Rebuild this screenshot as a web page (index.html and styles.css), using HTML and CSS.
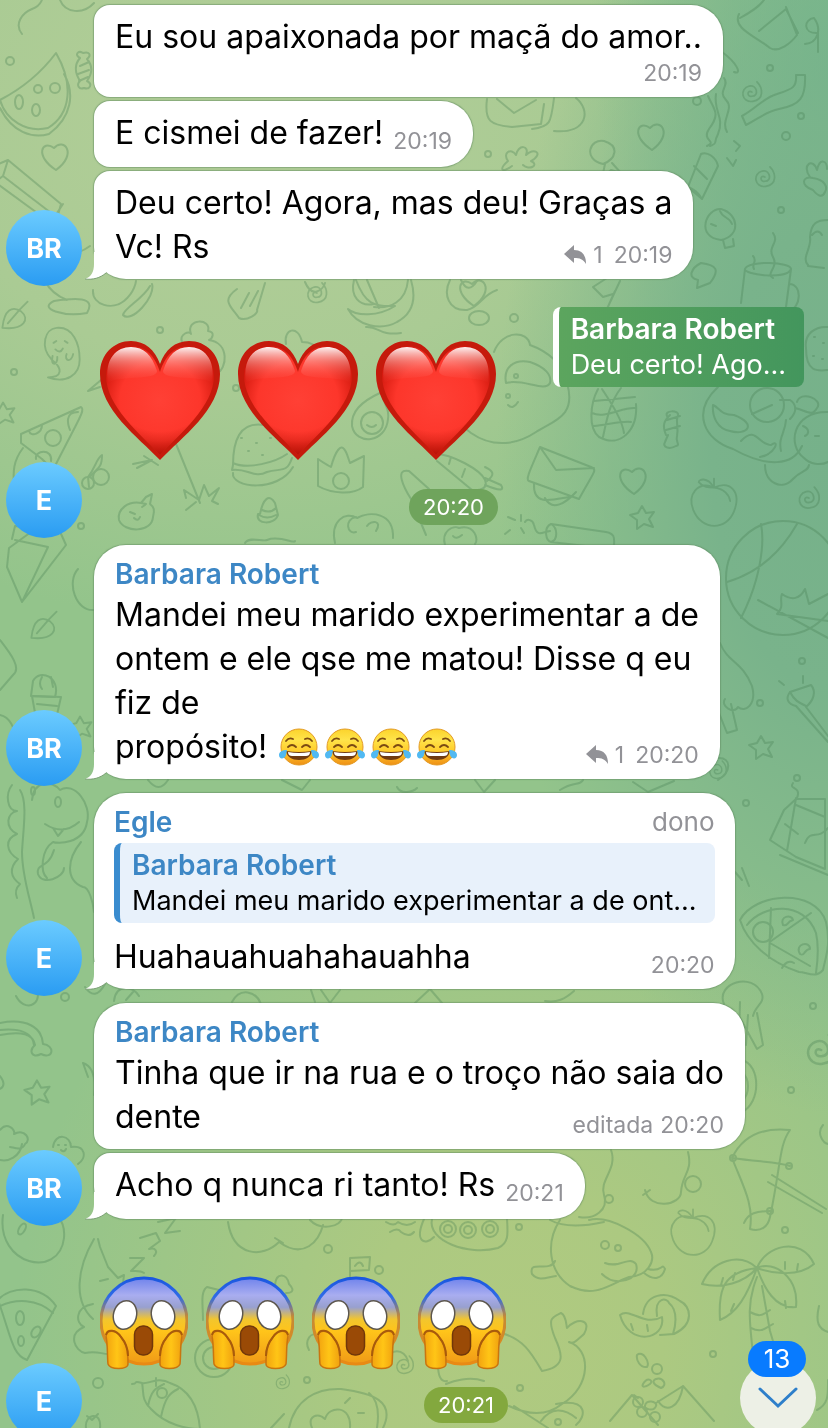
FILE: index.html
```html
<!DOCTYPE html>
<html lang="pt-BR">
<head>
<meta charset="utf-8">
<meta name="viewport" content="width=device-width, initial-scale=1">
<title>Chat</title>
<link rel="stylesheet" href="styles.css">
</head>
<body>
<svg class="defs" aria-hidden="true">
  <defs>
    <radialGradient id="heartFill" cx=".5" cy=".5" r=".6"><stop offset="0" stop-color="#ff4035"/><stop offset=".62" stop-color="#fd362b"/><stop offset="1" stop-color="#c91207"/></radialGradient>
    <linearGradient id="heartShine" x1="0" y1="0" x2="0" y2="1"><stop offset="0" stop-color="#fff" stop-opacity=".95"/><stop offset=".4" stop-color="#ffb3ad" stop-opacity=".55"/><stop offset="1" stop-color="#ff5147" stop-opacity="0"/></linearGradient>
    <radialGradient id="heartShade" gradientUnits="userSpaceOnUse" cx="60" cy="36" r="80"><stop offset=".68" stop-color="#b00c00" stop-opacity="0"/><stop offset="1" stop-color="#a50c00" stop-opacity=".75"/></radialGradient>
    <linearGradient id="fearFace" x1="0" y1="0" x2="0" y2="1"><stop offset="0" stop-color="#6f83ec"/><stop offset=".2" stop-color="#a9adf0"/><stop offset=".34" stop-color="#98a0cf"/><stop offset=".48" stop-color="#f2c62e"/><stop offset=".62" stop-color="#ffc41a"/><stop offset="1" stop-color="#f09a17"/></linearGradient>
    <linearGradient id="fearEdge" x1="0" y1="0" x2="0" y2="1"><stop offset="0" stop-color="#1a57e0"/><stop offset=".22" stop-color="#2f6be6"/><stop offset=".45" stop-color="#c58a35"/><stop offset="1" stop-color="#e98a14"/></linearGradient>
    <linearGradient id="hand" x1="0" y1="0" x2="1" y2="0"><stop offset="0" stop-color="#f2a30f"/><stop offset=".5" stop-color="#ffc516"/><stop offset="1" stop-color="#f0a00f"/></linearGradient>
    <linearGradient id="joyFace" x1="0" y1="0" x2="0" y2="1"><stop offset="0" stop-color="#fbd32c"/><stop offset=".3" stop-color="#ffe44a"/><stop offset=".65" stop-color="#ffc928"/><stop offset="1" stop-color="#ee8f16"/></linearGradient>
    <symbol id="heart" viewBox="0 0 120 120">
      <path fill="#c51a0c" d="M60 119C38 96 0 69 0 33 0 13 14 0 31 0c14 0 24 9 29 23C65 9 75 0 89 0c17 0 31 13 31 33 0 36-38 63-60 86z"/>
      <path fill="url(#heartFill)" d="M60 114C40 92 6 66 6 34 6 16 17 5 31 5c15 0 24 10 29 26C65 15 74 5 89 5c14 0 25 11 25 29 0 32-34 58-54 80z"/>
      <path fill="url(#heartShade)" d="M60 114C40 92 6 66 6 34 6 16 17 5 31 5c15 0 24 10 29 26C65 15 74 5 89 5c14 0 25 11 25 29 0 32-34 58-54 80z"/>
      <path fill="url(#heartShine)" d="M8 42C4 17 17 6 31 6c13 0 21 8 26 24 0 10-40 4-49 12zM112 42C116 17 103 6 89 6 76 6 68 14 63 30c0 10 40 4 49 12z"/>
    </symbol>
    <symbol id="scream" viewBox="0 0 88 94">
      <circle cx="44" cy="45" r="43" fill="url(#fearFace)" stroke="url(#fearEdge)" stroke-width="3"/>
      <g fill="#fff" stroke="#5d574e" stroke-width="1.500"><ellipse cx="25" cy="39" rx="11.500" ry="14.500" transform="rotate(16 25 39)"/><ellipse cx="63" cy="39" rx="11.500" ry="14.500" transform="rotate(-16 63 39)"/></g>
      <rect x="34.500" y="50" width="18" height="29" rx="8.500" fill="#9a4a06" stroke="#71370a" stroke-width="1.500"/>
      <g fill="url(#hand)" stroke="#c9750f" stroke-width="1.500"><path d="M6 60c1-7 10-6 15 1 6 7 7 13 7 27 0 6-18 6-20 0-1-9 0-18-2-28z"/><path d="M82 60c-1-7-10-6-15 1-6 7-7 13-7 27 0 6 18 6 20 0 1-9 0-18 2-28z"/></g>
      <path fill="none" stroke="#a85b0c" stroke-width="2" d="M6 59c1-6 10-6 15 2 5 6 7 11 7 19M82 59c-1-6-10-6-15 2-5 6-7 11-7 19"/>
    </symbol>
    <symbol id="joy" viewBox="0 0 40 38">
      <circle cx="20" cy="19" r="18" fill="url(#joyFace)" stroke="#e39a25"/>
      <path fill="none" stroke="#7b4a12" stroke-width="1.800" stroke-linecap="round" d="M7 13q3-4 7-2M33 13q-3-4-7-2M9 19q4-4 8 0M23 19q4-4 8 0"/>
      <path fill="#703a10" d="M7 23q13 2 26 0c-1 6-6 9-13 9S8 29 7 23z"/>
      <path fill="#fff" d="M9 24q11 2 22 0c0 3-2 4-4 4H13c-2 0-4-1-4-4z"/>
      <path fill="#51b9f2" d="M8 22C3 22 0 24 0 27c0 5 6 4 7 0zM32 22c5 0 8 2 8 5 0 5-6 4-7 0z"/>
    </symbol>
    <symbol id="reply" viewBox="0 0 22 20"><path fill="#929297" d="M0 9 10 0v5c8 0 12 5 12 14-3-5-6-6-12-6v5z"/></symbol>
    <symbol id="tail" viewBox="0 0 24 28"><path fill="#fff" d="M9 0v12C9 20 6 25 0 27c8 1 15-1 21-6V0z"/><path fill="none" stroke="#7c9f76" d="M0 27c8 1 15-1 21-6"/></symbol>
    <symbol id="dHeart" viewBox="-20 -20 40 40" overflow="visible"><path d="M0 14C-22 0-14-17-2-8 8-19 22-2 0 14z"/></symbol>
    <symbol id="dStar" viewBox="-20 -20 40 40" overflow="visible"><path d="m-1-11 4 7 8-1-5 7 4 8-9-3-7 5v-9l-7-5 8-2z"/></symbol>
    <symbol id="dSpiral" viewBox="-20 -20 40 40" overflow="visible"><path d="M1 0C-5-3-5 6 1 5c9 0 6-14-3-12-12 3-9 20 4 18C16 9 14-5 7-12"/></symbol>
    <symbol id="dCandy" viewBox="-20 -20 40 40" overflow="visible"><path d="M-4-12c-6-3-2-8 3-5 6-2 9 2 4 6 6 7 5 15 0 22 6 3 3 9-3 7-5 2-8-3-4-7-5-8-6-16 0-23zM-4-4 5-8M-6 4l11-4M-5 11l9-4"/></symbol>
    <symbol id="dLeaf" viewBox="-20 -20 40 40" overflow="visible"><path d="M-14 12c2-20 11-25 21-18 10 8 3 21-21 18zM-8 7 6-9M6-9l8-8"/></symbol>
    <symbol id="dGhost" viewBox="-20 -30 40 60" overflow="visible"><path d="M-14 24C2 24 2 14-10 5-23-9-17-28-5-29 13-31 20-12 20 5c0 16-14 26-34 19zM-6-6q5 5 8-1M-8-13l3-2M4-15l3 2M-9 1c-3 12 6 10 5 1M13-1c-2 10-10 7-7 0"/></symbol>
    <symbol id="dFruit" viewBox="-30 -30 60 60" overflow="visible"><path d="M0-16c-18-8-30 8-23 25 10 24 37 22 45 2 9-23-4-35-22-27zM0-16c-8-13-17-9-17-6 5 6 11 6 17 6zM0-16v-10M0-16c11 1 17 8 18 15"/></symbol>
  </defs>
</svg>

<main class="chat">
  <svg class="wallpaper" viewBox="0 0 828 1428" preserveAspectRatio="xMidYMid slice" aria-hidden="true">
    <g class="doodles">
      <g transform="translate(38 88)"><path d="M18-35C3-15-15 0-38 12c6 20 26 33 48 28 23-14 26-44 8-75zM-38 20c12 24 32 31 49 26C34 29 37 5 26-14"/><circle cx="0" cy="1" r="4"/><circle cx="17" cy="0" r="5"/><ellipse cx="-19" cy="14" rx="4" ry="7"/><ellipse cx="-2" cy="22" rx="4" ry="6"/></g>
      <path d="M22 34c-8-10 0-21 10-25 9-3 13-12 9-18M60 0c5 13 23 15 34 3"/>
      <use href="#dCandy" x="64" y="50" width="40" height="40"/><use href="#dHeart" x="36" y="136" width="40" height="40"/>
      <path d="m-4 165 12-5 53 44-6 22-60-44M8 160l-5 16 52 40 8-12M3 176l-8 6M42 228c4 31 30 31 48 18"/>
      <circle cx="10" cy="61" r="4"/><circle cx="697" cy="101" r="4"/><circle cx="786" cy="136" r="4"/><circle cx="770" cy="68" r="3"/><circle cx="801" cy="116" r="3"/>
      <path d="M740 18c9-5 18-10 24-18M739 14c-7 14 16 22 31 34 9 5 21-5 27-13l-11-28M759 31l27-22 12 24M805 44c13-1 17-15 9-26M814 18c-10 1-12 16 4 15M818 33v19M722 52c14 10 21 23 12 20M724 78c6 8-7 13 2 22s-6 20 1 32"/>
      <use href="#dSpiral" x="734" y="75" width="34" height="34"/><path d="M796 75h9c1 23-5 30-26 34-14 3-19 9-33 16l-4-9c15-8 21-18 35-22 16-5 20-7 19-19z"/><path d="M708 96c6 14 13 17 1 33-8 12 9 12-2 17M716 94c-3 17 9 23 2 40-6 12 1 8-8 12M734 141l6 5-4 5M727 158l6 8 3-6M701 154l-13 33 14 12 16-33c-2-9-11-15-17-12zM694 166l13 13M688 187c7 3 10 5 14 12"/>
      <use href="#dSpiral" x="747" y="160" width="34" height="34"/><path d="M810 177c-9-12 3-20 7-7 3-13 10-9 10-1M813 190c-13-4-11-15 0-12 12 2 15 9 12 14-3 7-8 3-12-2z"/>
      <use href="#dHeart" x="632" y="116" width="40" height="40"/><path d="M487 99c-3 23 4 26 25 28l29-3 3-20M497 99l17 14 22-13M554 98c-3 24-3 29-22 31M576 98c15 12 12 36-22 33"/>
      <circle cx="488" cy="154" r="3"/><path d="M512 166c-11 8-13 3-4-5-6-8 3-14 8-6 2-11 14-10 10 0 7-8 19-2 5 6 9 4-2 10-8 4M603 164c-21-5-13-26 1-23 16 5 12 18-1 23zM605 164l-3 14 9-8 10 3-9-10"/>
      <path d="M721 240c-26-3-15-32 0-31 18 5 20 27 0 31zM711 224l5 2M720 211c3 8 9 5 12 13M723 240l2 8 9-2-1-7"/><circle cx="781" cy="210" r="3"/><path d="M808 265c-7-7 4-17 2-28 1-14 7-17 18-17M812 235q6-7 10 0M824 268l-16-2M773 233c7 10-6 13 0 24s-8 16 0 21M753 256c5 5-2 8 1 13"/>
      <path d="M741 303l4-34c3-9 46-7 46 0l-5 38M745 269c-1 6 42 11 46 0M789 284c14 0 12 24 0 27M701 263c-10 5-14 15-3 17l-1 8 13-5c10-13 7-18-9-20zM615 291l-16 36M607 278l-14 9 10 10 10-3M620 281l-15 32"/>
      <path d="M354 280c-4 16 5 27 20 24M367 280l12 28M408 280c-2 22-18 29-34 27"/><use href="#dSpiral" x="299" y="276" width="34" height="34"/><use href="#dHeart" x="454" y="272" width="40" height="40"/>
      <path d="M237 289c-17 12-5 18 2 29 8 4 20-5 18-8l8-27M249 293l-8 15M258 291l-8 15M54 301c-17 8 10 16 33 12 10-17-13-15-33-12zM45 281c6 12 17 17 22 19M93 290c-1 16 20 20 31 11s12-20 12-20M150 286c-7 13-26 22-27 29 8 9 33-18 29-31M305 282c7 17 18 8 20 1M356 280c9 24 18 27 39 26-17 11-39 10-47 3 9 17 33 22 49 13 17-9 19-25 14-42M366 327c13-1 13 9 35 6M450 280c-7 14-2 31 17 30 13-3 15-15 30-20M461 280q7 15 16 1"/>
      <use href="#dLeaf" x="-3" y="299" width="36" height="36"/><use href="#dGhost" x="41" y="327" width="40" height="56"/>
      <circle cx="160" cy="330" r="3"/><circle cx="14" cy="372" r="3"/><circle cx="514" cy="318" r="4"/><ellipse cx="479" cy="318" rx="10" ry="7"/><circle cx="236" cy="388" r="3"/>
      <path d="M182 342c-3-8 8-12 9-8-6-16 21-16 17-3 8 1 4 8 1 9 21 3 18 29 8 33M286 344c-3-15 12-20 16-2 11 0 15 5 17 9M101 380l-13 11 12-4"/>
      <use href="#dStar" x="-15" y="394" width="38" height="38"/><path d="m21 434 60-27c5 3-3 13-28 63L42 459 21 443zM29 431c2 7 13 2 13-6M78 412c-14 0-10 13-8 18M36 459c-2-9 17-11 15 2"/><circle cx="53" cy="438" r="8"/>
      <path d="M23 448c-10 13-10 24-9 38M89 487l-1-10c8-10 8-18 14-22 0 15-6 13-12 22"/><circle cx="88" cy="483" r="6"/><circle cx="101" cy="477" r="8"/>
      <path d="M172 434l28 69M133 464l19-4-15 8M144 456l14 9M186 498l-2-8 15 10 5-15 5 11 10-8-7 13 6 3M186 510l10-8M146 504c-19-6-29 7-27 16 5 13 33 13 34-3 2-7 1-10-3-13l2-10-6 3-5 6M130 512l5 2M142 507l3-2M134 518q4 4 6-1"/>
      <circle cx="81" cy="526" r="3"/><path d="M264 425c-25-4-31 17-31 40l-1 5c16-2 22 9 35 2 15-4 20 1 25-14M233 463c15 7 43-1 54-9M233 473c-2 15 45 20 60-6M241 438h1M256 443h1M248 451h1M262 455h1M270 438h1"/>
      <path d="M318 459c7 5 10 6 13 8 5-18 10-22 13-18 3 3 4 9 6 14l14-7-1 31c-10 8-31 7-45-1z"/><circle cx="341" cy="481" r="8"/><path d="M382 392c-22 10-31 20-30 34 4 20 34 17 36-7 2-13-5-13-6-27z"/><circle cx="372" cy="423" r="11"/><path d="M367 425q5 4 9 0"/><path d="M437 461l35 29c9 1 16-2 13-10-4-10-33-26-50-26M451 457l-2 7M462 477l3-8M487 481c8-6 7-10-2-14M485 485c17 7 19 5 16 0l-16-7M409 471c-15-3-5 17 2 28l15 36M409 471l20 18"/>
      <path d="M260 514c3-15 9-21 15-11l3 12c-3 10-23 10-20-1zM262 510q8 4 14-2M259 515q8 5 17 0M335 543c-5-22 10-32 22-25 13-7 37-6 36 20M356 517c-12 2-9 18 0 15M367 526c4-6 16-6 9 5M445 545c-4-14 8-20 14-17 16-4 20 12 16 16M453 536q3 4 9-1M245 543c4-7 18-1 22-3 12-5 28 4 28 1"/>
      <path d="M494 352c8-22 34-22 36-7 17 6 35 20 37 38 10 34-14 38-31 49-18 12-42 17-65 1-24-17-6-37 22-53M506 383c-3-16 8-24 24-21 15 5 22 13 20 21-5 10-27-5-44 0z"/><circle cx="516" cy="376" r="2"/><circle cx="508" cy="396" r="2"/><path d="M508 405q5 5 10-3"/>
      <path d="M598 389c-8 15-10 39 1 48 22 12 39-8 37-33M594 401l41-4M592 413c13 6 30-6 43-5M594 426c16-2 28-5 37-4M602 389c9 14 20 30 22 44M621 388c-11 14-14 30-18 49M670 415c-6 6-8 10-4 20M667 420l13-4M666 430l14-4M667 416c-3-6 12-6 11-1-3 8 1 11-1 21-2 6 4 9-1 10-7 4-14 1-11-4l3-7"/>
      <path d="m540 447 51 20c7 3 3 4-12 32l-50-18c-4-1 2-13 11-34zM540 447l16 23 38-2M534 484c-1 22 17 16 35 13M545 498c7 14 21 5 31-6"/><use href="#dHeart" x="614" y="460" width="40" height="40"/><use href="#dStar" x="623" y="497" width="40" height="40"/><use href="#dFruit" x="687" y="475" width="54" height="54"/><use href="#dSpiral" x="790" y="480" width="36" height="36"/>
      <path d="M718 387c-27 25-14 53 15 62 34 19 60 17 69-3M713 405c7 3 7 10 21 10 24 9 13 21-4 16-13-2-18-15-17-26M741 441c15-16 17 4 30 4 9-7 5 9-11 12M772 405l-20 9M786 420c-1 14-8 17-5 31"/><circle cx="767" cy="405" r="17"/><path d="M780 400h10c6 4 8 11 0 19M797 402c3-12 27-3 20 6-5 9-10 3-22 0M828 412c-36-1-41 34-24 46 6 6 16 8 24 4M803 426c7 3 6 8 2 10M815 436h4M765 465c0 18 17 26 28 14 8-9 15-7 16-14M806 348c-2-14 9-22 22-21M806 348c0 25 12 23 22 22M814 337h1M823 343h1M813 356h1M822 359h1"/>
      <circle cx="783" cy="578" r="57"/><path d="M761 524c4 20-1 57-20 94M797 524c-20 35-46 51-70 58M828 621l-51-7c8-8 2-13 5-20 10 7 18 5 23-5l4 15 19-10M758 600l70 38M510 530l-5 4M508 517l7 3M521 515v6M521 528l3 5M525 522c2-4 8-2 9 3 3 13 8 7 16 6M551 524l55 8c10 2 8 7 8 14M551 524c-8 4-5 17 0 18l52 6M551 524c7 4 7 16 0 18"/>
      <path d="M9 548 53 516 66 545 22 602 7 567zM15 540l33 7-26 55M12 539l3-13 45 3M61 530l8-23M78 569c-12 13-2 43 16 41"/><use href="#dLeaf" x="26" y="607" width="36" height="40"/><path d="M0 640c10 13 22 28 13 35L0 690M31 696l2-15c7-13 28-4 22 16zM42 677q-4 7 0 12M51 677l2 10"/><path d="M32 696l5 28 19-5 5-22zM37 704l20 2M0 715c14 3 15 21 19 31"/><use href="#dStar" x="62" y="708" width="38" height="38"/>
      <path d="M720 643c8 20 22 18 32 43 5 19-7 27-14 21-4 8-18-1-13-8M731 704l6 26-10 3-10-25"/><use href="#dStar" x="742" y="727" width="40" height="40"/><path d="m790 692 21-7c6 7 2 16-5 22l22 29M790 692c-5 7-2 12 6 14l32 36M790 692c4 8 9 11 16 14M784 685l-5-4M803 683v-7M718 780c14-9 13-22 1-22"/><circle cx="760" cy="703" r="3"/><circle cx="797" cy="778" r="3"/><circle cx="802" cy="661" r="3"/>
      <use href="#dSpiral" x="702" y="755" width="30" height="30"/><path d="M148 780q11 14 20 0M282 780l20 10 8-10M397 787c4 8 16 5 20 1M475 780l9 12 11-12M560 790c14-9 20-4 23-10M633 782l15 10 26-11"/>
      <path d="M32 800c2-20 20-20 28-10 14-9 32 14 27 32-3 22-30 22-34 20-12 8-13 30-6 36M12 785C5 794 7 811 17 811c-10 2-13 16 0 23-13 5-11 18 1 25-9 9-8 18 2 25-5 5-5 9-3 14M20 790c8 12 3 40 2 62 0 24 8 46 12 66M45 824q18 12 34-2M53 828l5 8 6-7M81 842c-14 17-16 38 2 45 6 0 10 15 11 25M54 850c-6 20-18 12-16 24 4 12 26 4 26-6"/><ellipse cx="58" cy="802" rx="3" ry="5"/><ellipse cx="33" cy="791" rx="2" ry="4"/>
      <path d="m784 810 12-11h29v70l-29-12-26-17zM796 805l29 12M796 798l-9 53M785 824l13 10M797 798c5-12-9-8-4-15M805 843c6-15 12-2 23-15M780 855l48 20"/><circle cx="746" cy="803" r="3"/><path d="m742 868 7 18M735 872l7 8"/>
      <path d="M740 920c14-27 75-33 86 2 5 22 0 34-3 48-8 9-16 2-24 2-30-10-52-30-59-52zM747 925c16-21 57-25 69 8 3 13 2 26 0 40M771 908l-2 50M771 941l40-28M770 943l40 23"/><circle cx="763" cy="932" r="10"/><path d="M783 925c-4-9 9-11 10-5-7 2-5 7-10 5zM800 954c-6-10 10-14 10-5-6 0-5 8-10 5zM782 968q5-9 12-5"/>
      <path d="M16 996c8 16 26 10 21-6M85 987q10 15 20-3M114 1001c2-18 20-15 25-5M133 992l-7 8M232 1002c8-15 24-11 29 2M311 990l4 12M321 990l9 13 10-13M415 1003l15-14 12 14M545 1001c12 2 20-2 29-10M724 1004c-9-21 29-33 38-10 3 9-7 12-9 22M740 1002l-1 36M748 1015l-2 30M757 1013l6 32-6 4-18-33"/>
      <circle cx="65" cy="997" r="4"/><circle cx="813" cy="1006" r="3"/><circle cx="791" cy="1090" r="3"/><use href="#dStar" x="17" y="1071" width="42" height="42"/><use href="#dSpiral" x="795" y="1025" width="50" height="50"/>
      <path d="M0 1023c26-5 42 4 43 21 12 1 11 16-2 10-10 5-12-4-6-9-2-11-13-14-35-10M0 1030c22-2 33 4 34 15M88 1077l-5-14c9 3 13 14 11 32M0 1076q7 9 0 13M742 1060c19 5 19 43 0 52M742 1072c8 7 8 22 0 29M823 1125c-7 8 0 18 5 19"/>
      <path d="M0 1130c7-9 16 0 14 4 11-6 18 6 11 10-3 8-12 3-15 3M0 1160c8 2 20-3 22-16M53 1147c2-15 18-12 18 0 15-2 16 11 7 17M58 1145h1M65 1145h1M61 1150q3 3 5-1"/>
      <path d="M732 1158c10-21 29-31 58-28-11 15-9 35-20 87-2 10-9 15-20 12 4-25-7-43-18-71zM732 1158c28 4 47 4 58 8M744 1223c4-10 13-12 26-12M772 1175l54 34M768 1182l54 31"/><circle cx="733" cy="1158" r="3"/><circle cx="789" cy="1166" r="3"/><circle cx="770" cy="1211" r="3"/><circle cx="693" cy="1184" r="8"/><circle cx="609" cy="1199" r="4"/>
      <path d="M611 1150c7 19-12 30-7 45s-10 25-25 22M688 1152c5 20-6 22-7 40 0 13-31 19-36-2M643 1195l7-5"/>
      <path d="M3 1215c-7 50 56 65 61 23 1-12-3-18-6-21M94 1239c-17 29-21 62-1 80M98 1239l2 8 8 20 10 11 6-3-1 8M100 1281l8-2M130 1258h14l-13 13c5 0 9-1 13 2M140 1238l16-5 4 8-11 8c7-2 9 3 5 7M158 1222l18-4-11 15 15-2M93 1304c-18 3-18 19-9 23-17 7-9 24 1 26 13-3 17 2 26 1"/><ellipse cx="22" cy="1229" rx="3" ry="6" transform="rotate(30 22 1229)"/>
      <path d="M-2 1300c12-14 43-16 58 6L27 1360c-15-5-16-24-29-60zM0 1306c15-7 37-8 53 7"/><ellipse cx="20" cy="1318" rx="4" ry="7"/><ellipse cx="36" cy="1332" rx="4" ry="6" transform="rotate(35 36 1332)"/><ellipse cx="21" cy="1341" rx="3" ry="5"/>
      <path d="M228 1222c5 34 34 37 51 20 25 18 40-1 44-17M275 1238l8 5M310 1220c10 11 32 7 32-3M350 1287v-29l20-1-1 13-19 1M355 1266q5-7 8 0M203 1320c0-15-3-28 4-33l12 3M275 1285c1-13 12-12 14-1 5 5 5 9-3 9M386 1222q8 5 12 0 9 6 17 0M390 1232q8-5 11 0 8 6 13 0M309 1350c-5-9 2-20 10-14M388 1361c0-13 17-13 20 0"/><circle cx="328" cy="1249" r="4"/><circle cx="379" cy="1270" r="4"/><circle cx="214" cy="1358" r="19"/><circle cx="214" cy="1358" r="11"/><circle cx="98" cy="1383" r="5"/><circle cx="307" cy="1380" r="3"/>
      <use href="#dSpiral" x="270" y="1370" width="24" height="24"/><use href="#dSpiral" x="389" y="1350" width="30" height="30"/>
      <path d="M132 1384c7 0 0-4 10-1 2 9-1 17 9 26 15 16 36 20 49 20-2-26-12-40-30-46-12-7-23 2-28 0M148 1406c3-16 8-18 16-22M161 1417c4-20 9-24 17-28M156 1378v8M86 1428c-2-14 16-18 14 0M87 1416l5 4 6-6M271 1428l13-14M289 1428c6-29 28-40 52-39 31 4 55 12 42 39M312 1428c-5-12 6-16 13-9 4-14 27-14 25 9M369 1393c9 7 10 22 8 35M345 1403l5-5M358 1413h6"/><circle cx="162" cy="1393" r="5"/>
      <path d="M432 1219c-5 22 36 37 66 29 11-5 10-14 9-29M424 1219c-10 23 1 27 10 18"/><circle cx="448" cy="1229" r="8"/><circle cx="448" cy="1229" r="4"/><circle cx="468" cy="1230" r="8"/><circle cx="468" cy="1230" r="4"/><circle cx="490" cy="1229" r="8"/><circle cx="490" cy="1229" r="4"/><circle cx="519" cy="1227" r="3"/>
      <path d="M560 1220c-15 23-11 52 10 66 26 13 42-3 59-9 19-1 26-16 22-25-7-18-43-37-62-32M550 1220q18 10 54 2M555 1261c-5 12-27-2-23 13 7 8 15 3 24 2M605 1263c15 6 24-8 31 1 2 6-1 11-5 14-14 7-24 1-29-4M648 1269c14 4 14-7 17 0-3 10-11 12-21 4"/><circle cx="605" cy="1245" r="4"/><circle cx="618" cy="1248" r="3"/>
      <use href="#dFruit" x="667" y="1206" width="52" height="52"/><circle cx="785" cy="1230" r="3"/>
      <path d="M757 1268c-17-16-45-8-55 16 20 5 42-1 55-16zM757 1268c-33 4-39 20-37 52 17-7 27-24 37-52zM757 1268c8-22 44-33 57-4-15 13-41 10-57 4zM757 1268c17-8 42 9 39 39-21 2-32-19-39-39zM757 1277c-10 25-8 41-4 77M762 1286l8 45 8 27M750 1312c8 4 11 5 20-2M751 1328c10 5 13 1 22-4M723 1278l-2 7M735 1273l-2 7M734 1304l-3 7M785 1262v7M798 1264l-1 6M785 1301l1 7"/>
      <path d="M620 1315c10-8 24 12 42 2 4 23-33 30-42-2zM643 1314c3-21 23-23 37-13 11 5 15 23-6 33l-14 1M657 1316c-3-20 11-18 12-13 10 8 6 25 4 31M631 1324l2 6M647 1325l1 6"/>
      <path d="M447 1381c-14 3-8-33-6-46M501 1333c23 6 31 21 41 38 25-4 20-18 13-33-8-20-3-21 6-25 5 2 5 10 6 15 8-10 26-10 17 6-10 9-11 10-15 8 22 7 23 44-7 62-15 12-34 11-53 2M484 1381c-15-5-31 0-38 3M556 1404c33-6 30 13 20 21M541 1421c10-14 23-13 35-3M514 1406l34 22"/><circle cx="520" cy="1388" r="3"/><circle cx="558" cy="1422" r="3"/><circle cx="713" cy="1354" r="3"/>
      <path d="m610 1421 22-26 26 30M634 1395l4 3M656 1403l27-17 31 35M683 1386c-4 23-17 27-25 15M637 1355c6-5 13 7 10 12-7 1-11-7-10-12zM643 1384c5-8 11-3 7 0s-9 4-7 0zM656 1379c7-2 12 6 5 9-7-3-10-7-5-9zM645 1406c0-7 13-5 11 0-2 6-12 3-11 0zM819 1306c-4 17 0 23 9 26M817 1410c12-6 11-16 11-30"/><circle cx="657" cy="1369" r="5"/><circle cx="638" cy="1402" r="5"/><circle cx="642" cy="1412" r="5"/><circle cx="655" cy="1417" r="5"/>
    </g>
  </svg>

  <section class="group">
    <div class="avatar">BR</div>
    <div class="stack">
      <article class="bubble"><p class="text">Eu sou apaixonada por maçã do amor..</p><footer class="meta below"><time>20:19</time></footer></article>
      <article class="bubble inline"><p class="text">E cismei de fazer!</p><footer class="meta"><time>20:19</time></footer></article>
      <article class="bubble tailed"><p class="text">Deu certo! Agora, mas deu! Graças a<br>Vc! Rs</p><footer class="meta"><svg class="reply" aria-hidden="true"><use href="#reply"/></svg><span class="count">1</span><time>20:19</time></footer><svg class="tail" aria-hidden="true"><use href="#tail"/></svg></article>
    </div>
  </section>

  <section class="group replying">
    <div class="avatar">E</div>
    <div class="sticker">
      <div class="emojis"><svg class="heart" role="img" aria-label="coração"><use href="#heart"/></svg><svg class="heart" role="img" aria-label="coração"><use href="#heart"/></svg><svg class="heart" role="img" aria-label="coração"><use href="#heart"/></svg></div>
      <time class="pill">20:20</time>
    </div>
    <blockquote class="quote floating"><strong class="name">Barbara Robert</strong><p class="excerpt">Deu certo! Ago...</p></blockquote>
  </section>

  <section class="group">
    <div class="avatar">BR</div>
    <div class="stack">
      <article class="bubble named tailed"><strong class="name">Barbara Robert</strong><p class="text">Mandei meu marido experimentar a de<br>ontem e ele qse me matou! Disse q eu<br>fiz de<br>propósito! <span class="smileys"><svg class="joy" role="img" aria-label="risos"><use href="#joy"/></svg><svg class="joy" role="img" aria-label="risos"><use href="#joy"/></svg><svg class="joy" role="img" aria-label="risos"><use href="#joy"/></svg><svg class="joy" role="img" aria-label="risos"><use href="#joy"/></svg></span></p><footer class="meta"><svg class="reply" aria-hidden="true"><use href="#reply"/></svg><span class="count">1</span><time>20:20</time></footer><svg class="tail" aria-hidden="true"><use href="#tail"/></svg></article>
    </div>
  </section>

  <section class="group">
    <div class="avatar">E</div>
    <div class="stack">
      <article class="bubble named tailed quoted"><header class="head"><strong class="name">Egle</strong><span class="role">dono</span></header><blockquote class="quote"><strong class="name">Barbara Robert</strong><p class="excerpt">Mandei meu marido experimentar a de ont...</p></blockquote><p class="text">Huahauahuahahauahha</p><footer class="meta"><time>20:20</time></footer><svg class="tail" aria-hidden="true"><use href="#tail"/></svg></article>
    </div>
  </section>

  <section class="group">
    <div class="avatar">BR</div>
    <div class="stack">
      <article class="bubble named"><strong class="name">Barbara Robert</strong><p class="text">Tinha que ir na rua e o troço não saia do<br>dente</p><footer class="meta"><span>editada</span><time>20:20</time></footer></article>
      <article class="bubble inline tailed"><p class="text">Acho q nunca ri tanto! Rs</p><footer class="meta"><time>20:21</time></footer><svg class="tail" aria-hidden="true"><use href="#tail"/></svg></article>
    </div>
  </section>

  <section class="group last">
    <div class="avatar">E</div>
    <div class="sticker">
      <div class="emojis"><svg class="scream" role="img" aria-label="susto"><use href="#scream"/></svg><svg class="scream" role="img" aria-label="susto"><use href="#scream"/></svg><svg class="scream" role="img" aria-label="susto"><use href="#scream"/></svg><svg class="scream" role="img" aria-label="susto"><use href="#scream"/></svg></div>
      <time class="pill olive">20:21</time>
    </div>
  </section>

  <button class="jump" aria-label="13 novas mensagens"><span class="badge">13</span><svg class="chevron" viewBox="0 0 40 22" aria-hidden="true"><path d="m2 2 18 17L38 2"/></svg></button>
</main>
</body>
</html>
```
FILE: styles.css
```css
* { box-sizing: border-box; }
body, p, blockquote { margin: 0; }
body { font-family: Inter, "Liberation Sans", sans-serif; color: #000; }
.defs { position: absolute; width: 0; height: 0; }

.chat {
  position: relative;
  isolation: isolate;
  height: 100vh;
  overflow: hidden;
  padding: 5px 12px 0 6px;
  background:
    radial-gradient(ellipse 40% 46% at 100% 32%, #76b18a 0%, #79b38b 35%, transparent 100%),
    radial-gradient(ellipse 28% 30% at 100% 5%, #75b58c 0%, transparent 100%),
    radial-gradient(ellipse 60% 38% at 62% 94%, #b0ca80 0%, #acc981 30%, transparent 100%),
    radial-gradient(ellipse 75% 36% at 30% 8%, #b3ce98 0%, #aacb94 50%, transparent 100%),
    #93c48b;
}
.wallpaper { position: absolute; inset: 0; z-index: -1; width: 100%; height: 100%; }
.doodles, .doodles use { fill: none; stroke: #477e52; stroke-width: 2; stroke-linecap: round; stroke-linejoin: round; }
.doodles { opacity: .32; }

.group { display: flex; align-items: flex-end; gap: 12px; margin-bottom: 7px; }
.avatar {
  flex: none;
  display: grid;
  place-items: center;
  width: 76px;
  height: 76px;
  border-radius: 50%;
  background: linear-gradient(#6bcbff, #2a9cf2);
  color: #fff;
  font-size: 27px;
  font-weight: 700;
}
.stack { display: flex; flex-direction: column; align-items: flex-start; gap: 4px; padding-bottom: 7px; }

.bubble {
  position: relative;
  display: flex;
  flex-direction: column;
  padding: 10px 21px;
  border-radius: 16px 32px 32px 16px;
  background: #fff;
  box-shadow: 0 0 1px 1px #5f8a6080;
}
.named { border-top-left-radius: 32px; }
.tailed { border-bottom-left-radius: 32px; }
.inline { flex-direction: row; align-items: flex-end; gap: 10px; padding-bottom: 12px; }
.text { font-size: 32px; line-height: 44px; white-space: nowrap; }
.name { color: #3d87c5; font-size: 28px; font-weight: 600; line-height: 38px; }
.head { display: flex; justify-content: space-between; align-items: center; padding-bottom: 2px; }
.role { color: #929297; font-size: 26px; line-height: 32px; }

.meta {
  display: flex;
  align-items: center;
  align-self: flex-end;
  gap: 7px;
  height: 28px;
  margin-top: -28px;
  color: #929297;
  font-size: 23px;
  line-height: 28px;
}
.below { margin-top: 0; }
.inline .meta { margin: 0; }
.count { margin-right: 4px; }
.reply { width: 22px; height: 20px; }
.tail { position: absolute; left: -9px; bottom: -1px; width: 24px; height: 28px; }

.quote {
  display: flex;
  flex-direction: column;
  padding: 4px 18px 4px 12px;
  border-left: 6px solid #3a8ccf;
  border-radius: 8px;
  background: #e8f1fb;
}
.quote .name { line-height: 36px; }
.excerpt { font-size: 27px; line-height: 36px; white-space: nowrap; }
.quoted { padding-right: 20px; padding-left: 20px; }
.quoted .text { margin-top: 12px; }
.floating {
  align-self: flex-start;
  margin-left: auto;
  border-left-color: #fff;
  background: linear-gradient(90deg, #5ca55e, #43965d);
  color: #fff;
}
.floating .name { color: #fff; }

.smileys { display: inline-flex; gap: 6px; padding-left: 3px; vertical-align: -8px; }
.joy { width: 40px; height: 38px; }

.sticker { display: flex; flex-direction: column; align-items: flex-end; gap: 28px; padding-bottom: 13px; }
.emojis { display: flex; gap: 18px; padding: 0 2px 0 6px; }
.heart { width: 120px; height: 120px; }
.scream { width: 88px; height: 94px; }
.pill {
  padding: 0 14px;
  border-radius: 18px;
  background: #6fa45c;
  color: #fff;
  font-size: 22px;
  line-height: 36px;
}
.olive { background: #83a83e; }
.replying { min-height: 231px; margin-top: 21px; }
.replying .floating { margin-right: 12px; }
.last { margin-top: 50px; }
.last .sticker { gap: 17px; padding-bottom: 16px; }

.jump {
  position: absolute;
  right: 12px;
  bottom: -8px;
  display: grid;
  place-items: center;
  width: 76px;
  height: 76px;
  padding: 0;
  border: 0;
  border-radius: 50%;
  background: #edf0e6;
  font-family: inherit;
}
.badge {
  position: absolute;
  top: -19px;
  left: 8px;
  width: 58px;
  border-radius: 18px;
  background: #087bff;
  color: #fff;
  font-size: 26px;
  line-height: 36px;
}
.chevron { width: 40px; height: 22px; fill: none; stroke: #2e7fca; stroke-width: 3; stroke-linecap: round; }
```
